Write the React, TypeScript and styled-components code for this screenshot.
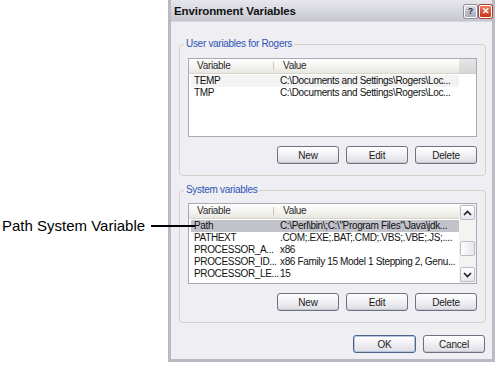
import React from 'react';
import styled, { createGlobalStyle } from 'styled-components';

export interface IVariable {
  name: string;
  value: string;
}

const userVariables: IVariable[] = [
  { name: 'TEMP', value: 'C:\\Documents and Settings\\Rogers\\Loc...' },
  { name: 'TMP', value: 'C:\\Documents and Settings\\Rogers\\Loc...' },
];

const systemVariables: IVariable[] = [
  { name: 'Path', value: 'C:\\Perl\\bin\\;C:\\"Program Files"\\Java\\jdk...' },
  { name: 'PATHEXT', value: '.COM;.EXE;.BAT;.CMD;.VBS;.VBE;.JS;....' },
  { name: 'PROCESSOR_A...', value: 'x86' },
  { name: 'PROCESSOR_ID...', value: 'x86 Family 15 Model 1 Stepping 2, Genu...' },
  { name: 'PROCESSOR_LE...', value: '15' },
];

const GlobalStyle = createGlobalStyle`
  body {
    margin: 0;
    background: #fff;
    font-family: 'Liberation Sans', Arial, sans-serif;
  }
`;

interface VariableListProps {
  rows: IVariable[];
  height: number;
  selected?: number;
  tinted?: number;
  scrollable?: boolean;
}

const VariableList = ({ rows, height, selected, tinted, scrollable }: VariableListProps) => (
  <ListBox $height={height}>
    <ListMain>
      <Header>
        <HeaderCell $sep>Variable</HeaderCell>
        <HeaderCell>Value</HeaderCell>
      </Header>
      <Rows>
        {rows.map((row, index) => (
          <Row key={row.name} $selected={index === selected} $tinted={index === tinted}>
            <span>{row.name}</span>
            <span>{row.value}</span>
          </Row>
        ))}
      </Rows>
    </ListMain>
    {scrollable ? (
      <ScrollBar>
        <ScrollButton>
          <svg width="9" height="6" viewBox="0 0 9 6">
            <path d="M1 5 L4.5 1.5 L8 5" fill="none" stroke="#1e1e2a" strokeWidth="1.6" />
          </svg>
        </ScrollButton>
        <Track>
          <Thumb />
        </Track>
        <ScrollButton>
          <svg width="9" height="6" viewBox="0 0 9 6">
            <path d="M1 1 L4.5 4.5 L8 1" fill="none" stroke="#1e1e2a" strokeWidth="1.6" />
          </svg>
        </ScrollButton>
      </ScrollBar>
    ) : (
      <SideColumn>
        <HeaderFiller />
      </SideColumn>
    )}
  </ListBox>
);

export default function App() {
  return (
    <Page>
      <GlobalStyle />
      <Dialog>
        <TitleBar>
          <Title>Environment Variables</Title>
          <CaptionButtons>
            <CaptionButton $kind="help">?</CaptionButton>
            <CaptionButton $kind="close">✕</CaptionButton>
          </CaptionButtons>
        </TitleBar>
        <Body>
          <Group>
            <Legend>User variables for Rogers</Legend>
            <VariableList rows={userVariables} height={79} tinted={0} />
            <ButtonRow>
              <Button>New</Button>
              <Button>Edit</Button>
              <Button>Delete</Button>
            </ButtonRow>
          </Group>
          <Group $gap>
            <Legend>System variables</Legend>
            <VariableList rows={systemVariables} height={81} selected={0} scrollable />
            <ButtonRow>
              <Button>New</Button>
              <Button>Edit</Button>
              <Button>Delete</Button>
            </ButtonRow>
          </Group>
          <Footer>
            <Button $default>OK</Button>
            <Button>Cancel</Button>
          </Footer>
        </Body>
      </Dialog>
      <Callout>
        <CalloutText>Path System Variable</CalloutText>
        <Leader />
      </Callout>
    </Page>
  );
}

const Page = styled.div`
  position: relative;
  width: 500px;
  height: 366px;
  display: flex;
  align-items: flex-start;
  overflow: hidden;
`;

const Dialog = styled.div`
  margin-left: 168px;
  width: 327px;
  box-sizing: border-box;
  border: 3px solid #babac4;
  border-top: none;
  background: #efeff3;
  display: flex;
  flex-direction: column;
`;

const TitleBar = styled.div`
  height: 22px;
  display: flex;
  align-items: center;
  justify-content: space-between;
  padding: 0 0 0 3px;
  background: linear-gradient(#e6e6ec, #d8d8e0 50%, #c6c6d0);
  border-bottom: 1px solid #d6d6de;
  box-sizing: border-box;
`;

const Title = styled.span`
  font-size: 11.5px;
  font-weight: bold;
  color: #111;
  letter-spacing: -0.1px;
`;

const CaptionButtons = styled.div`
  display: flex;
  gap: 2px;
  margin-top: 2px;
`;

const CaptionButton = styled.span<{ $kind: 'help' | 'close' }>`
  width: 11px;
  height: 11px;
  border: 1px solid #fff;
  border-radius: 2px;
  display: flex;
  align-items: center;
  justify-content: center;
  font-size: 9px;
  font-weight: bold;
  line-height: 1;
  color: ${p => (p.$kind === 'help' ? '#2a2a3a' : '#fff')};
  background: ${p =>
    p.$kind === 'help'
      ? 'linear-gradient(#dadae2, #a8a8b8)'
      : 'linear-gradient(#f07a5c, #c8321a)'};
  box-shadow: 0 0 0 1px ${p => (p.$kind === 'help' ? '#8c8c9c' : '#a84030')};
`;

const Body = styled.div`
  padding: 16px 6px 6px 8px;
  display: flex;
  flex-direction: column;
`;

const Group = styled.fieldset<{ $gap?: boolean }>`
  margin: ${p => (p.$gap ? '8px' : '0')} 0 0 0;
  padding: 7px 8px 11px 8px;
  min-width: 0;
  border: 1px solid #d2d2c9;
  border-radius: 4px;
  display: flex;
  flex-direction: column;
  &:first-child {
    padding-top: 8px;
  }
`;

const Legend = styled.legend`
  padding: 0 2px;
  margin-left: -4px;
  font-size: 10px;
  line-height: 12px;
  letter-spacing: -0.3px;
  color: #2f52b3;
`;

const ListBox = styled.div<{ $height: number }>`
  height: ${p => p.$height}px;
  box-sizing: border-box;
  border: 1px solid #a6abb3;
  background: #fff;
  display: flex;
  overflow: hidden;
`;

const ListMain = styled.div`
  flex: 1;
  min-width: 0;
  display: flex;
  flex-direction: column;
`;

const Header = styled.div`
  height: 15px;
  flex: none;
  box-sizing: border-box;
  display: grid;
  grid-template-columns: 85px 1fr;
  background: linear-gradient(#ffffff, #f3f2ee 60%, #e8e6df);
  border-bottom: 1px solid #d7d4cc;
`;

const HeaderCell = styled.span<{ $sep?: boolean }>`
  position: relative;
  font-size: 10px;
  line-height: 14px;
  letter-spacing: -0.3px;
  color: #2a2a2a;
  padding-left: ${p => (p.$sep ? '8px' : '9px')};
  ${p =>
    p.$sep &&
    `
    &:after {
      content: '';
      position: absolute;
      right: 0;
      top: 3px;
      bottom: 3px;
      width: 1px;
      background: #c9c6bc;
    }
  `}
`;

const Rows = styled.div`
  padding-top: 1px;
  display: flex;
  flex-direction: column;
`;

const Row = styled.div<{ $selected?: boolean; $tinted?: boolean }>`
  height: 12px;
  margin: 0 0 0 2px;
  padding-left: 3px;
  display: grid;
  grid-template-columns: 86px 1fr;
  font-size: 10px;
  line-height: 12px;
  letter-spacing: -0.35px;
  color: #111;
  white-space: nowrap;
  overflow: hidden;
  background: ${p => (p.$selected ? '#c2c2ca' : p.$tinted ? '#f3f3f3' : 'transparent')};

  span {
    overflow: hidden;
  }
`;

const SideColumn = styled.div`
  width: 17px;
  flex: none;
  display: flex;
  flex-direction: column;
`;

const HeaderFiller = styled.div`
  height: 15px;
  background: linear-gradient(#e6e6e6, #d6d6d6);
  border-bottom: 1px solid #cfcfcf;
  box-sizing: border-box;
`;

const ScrollBar = styled.div`
  width: 17px;
  flex: none;
  display: flex;
  flex-direction: column;
  background: #f3f3f1;
  padding: 1px 0;
  box-sizing: border-box;
`;

const ScrollButton = styled.div`
  height: 15px;
  flex: none;
  margin: 0 1px;
  box-sizing: border-box;
  border: 1px solid #b9bdc8;
  border-radius: 2px;
  background: linear-gradient(#ffffff, #e7e7ee);
  display: flex;
  align-items: center;
  justify-content: center;
`;

const Track = styled.div`
  flex: 1;
  display: flex;
  flex-direction: column;
`;

const Thumb = styled.div`
  height: 15px;
  margin: 21px 1px 0 1px;
  box-sizing: border-box;
  border: 1px solid #b9bdc8;
  border-radius: 2px;
  background: linear-gradient(90deg, #ffffff, #e6e6ec);
`;

const ButtonRow = styled.div`
  margin-top: 9px;
  display: flex;
  justify-content: flex-end;
  gap: 7px;
`;

const Footer = styled.div`
  margin-top: 12px;
  padding-right: 1px;
  display: flex;
  justify-content: flex-end;
  gap: 7px;
`;

const Button = styled.button<{ $default?: boolean }>`
  width: ${p => (p.$default ? '63px' : '62px')};
  height: 18px;
  padding: 0;
  box-sizing: border-box;
  font-family: 'Liberation Sans', Arial, sans-serif;
  font-size: 10px;
  letter-spacing: -0.2px;
  color: #1a1a1a;
  border: 1px solid ${p => (p.$default ? '#4f6189' : '#6f7080')};
  border-radius: 3px;
  background: linear-gradient(#ffffff, #f2f2f5 45%, #dcdce3);
  box-shadow: ${p => (p.$default ? 'inset 0 0 0 1px #b4c6e6' : 'inset 0 -1px 0 #c8c8d2')};
`;

const Callout = styled.div`
  position: absolute;
  left: 2px;
  top: 217px;
  display: flex;
  align-items: center;
  gap: 6px;
  z-index: 1;
`;

const CalloutText = styled.span`
  font-size: 15px;
  line-height: 18px;
  color: #000;
`;

const Leader = styled.span`
  width: 44px;
  height: 1.5px;
  background: #000;
`;
